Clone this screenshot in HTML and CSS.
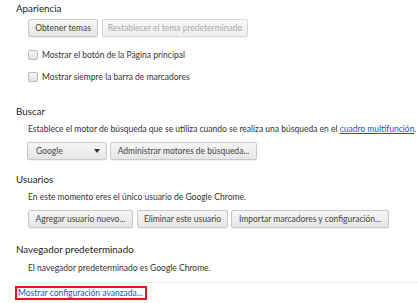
FILE: index.html
```html
<!DOCTYPE html>
<html lang="es">
<head>
<meta charset="UTF-8" />
<meta name="viewport" content="width=device-width, initial-scale=1" />
<title>Configuración</title>
<link rel="stylesheet" href="styles.css">
</head>
<body>
  <div class="page">
    <section class="group">
      <h3>Apariencia</h3>
      <div class="body">
        <div class="btn-row">
          <button class="w-themes">Obtener temas</button>
          <button class="w-reset" disabled>Restablecer el tema predeterminado</button>
        </div>
        <label class="check first"><span class="box"></span>Mostrar el botón de la Página principal</label>
        <label class="check"><span class="box"></span>Mostrar siempre la barra de marcadores</label>
      </div>
    </section>

    <section class="group search">
      <h3>Buscar</h3>
      <div class="body">
        <p>Establece el motor de búsqueda que se utiliza cuando se realiza una búsqueda en el <a href="#">cuadro multifunción</a>.</p>
        <div class="btn-row">
          <div class="select">Google<span class="arrow"></span></div>
          <button class="w-engines">Administrar motores de búsqueda...</button>
        </div>
      </div>
    </section>

    <section class="group users">
      <h3>Usuarios</h3>
      <div class="body">
        <p>En este momento eres el único usuario de Google Chrome.</p>
        <div class="btn-row">
          <button class="w-add">Agregar usuario nuevo...</button>
          <button class="w-remove">Eliminar este usuario</button>
          <button class="w-import">Importar marcadores y configuración...</button>
        </div>
      </div>
    </section>

    <section class="group default">
      <h3>Navegador predeterminado</h3>
      <div class="body">
        <p>El navegador predeterminado es Google Chrome.</p>
      </div>
    </section>

    <div class="footer">
      <a href="#" class="advanced">Mostrar configuración avanzada...</a>
    </div>
  </div>
</body>
</html>
```

FILE: styles.css
```css
body {
  margin: 0; background: #fff;
  font-family: Lato, 'Liberation Sans', sans-serif;
  font-size: 8.5px; color: #333;
}
.page {
  padding-top: 1px;
}
h3 {
  margin: 0 0 4px; padding-left: 16px;
  font-size: 9.8px; line-height: 14px; font-weight: normal; color: #222;
}
.body {
  padding-left: 28px;
}
p {
  margin: 0; line-height: 14px; white-space: nowrap;
}
a {
  color: #15c;
}
.btn-row {
  display: flex; gap: 4px; height: 18px;
}
button, .select {
  box-sizing: border-box;
  font-family: inherit; font-size: 8.5px; color: #444;
  height: 18px; padding: 0 4px; margin: 0;
  white-space: nowrap; flex-shrink: 0;
  border: 1px solid #c8c8c8; border-radius: 2px;
  background: linear-gradient(#f6f6f6, #e6e6e6);
  box-shadow: 0 1px 0 rgba(0,0,0,0.05);
}
button:disabled {
  color: #aaa; border-color: #d8d8d8;
  background: linear-gradient(#f8f8f8, #eeeeee);
}
.w-themes { width: 70px; }
.w-reset { width: 146px; }
.w-engines { width: 147px; margin-left: -1px; }
.w-add { width: 105px; }
.w-remove { width: 91px; }
.w-import { width: 158px; margin-left: -1px; }
.select {
  width: 80px; margin-left: -1px;
  display: flex; align-items: center; justify-content: space-between;
  padding: 0 6px 0 8px;
}
.arrow {
  width: 0; height: 0;
  border-left: 3px solid transparent; border-right: 3px solid transparent;
  border-top: 4px solid #333;
}
.check {
  display: flex; align-items: center; gap: 4px;
  height: 22px;
}
.check.first {
  margin-top: 7px;
}
.box {
  width: 8px; height: 8px;
  border: 1px solid #b8b8b8; border-radius: 2px;
  background: linear-gradient(#f6f6f6, #e2e2e2);
}
.search {
  margin-top: 16px;
}
.search p {
  margin: 3px 0 6px;
}
.users {
  margin-top: 12px;
}
.users p {
  margin: 2px 0 6px;
}
.default {
  margin-top: 14px;
}
.default p {
  margin-top: 5px;
}
.footer {
  margin: 7px 0 0 15px; padding-top: 3px;
  border-top: 1px solid #eee;
}
.advanced {
  display: inline-block; padding: 1px 4px 1px 3px;
  line-height: 12px; text-decoration: none;
  outline: 2px solid #e8141a; outline-offset: -2px;
}
```
